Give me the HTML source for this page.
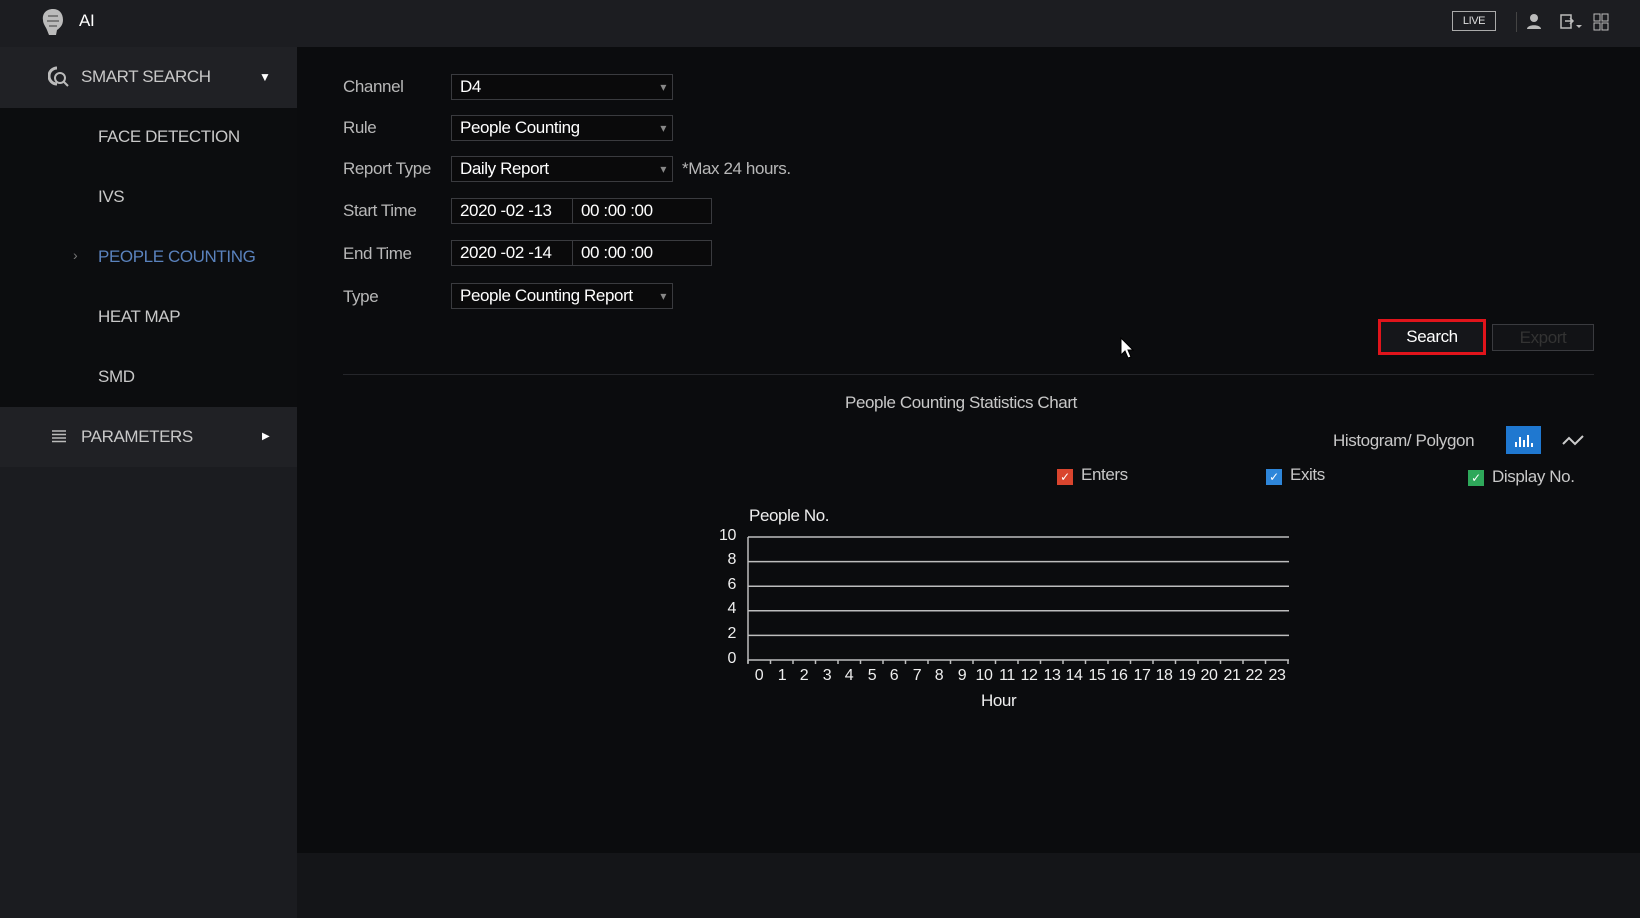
<!DOCTYPE html>
<html><head><meta charset="utf-8"><style>
*{margin:0;padding:0;box-sizing:border-box}
body{width:1640px;height:918px;background:#0b0c0e;font-family:"Liberation Sans",sans-serif;color:#d8d8d8;position:relative;overflow:hidden;font-size:17px;letter-spacing:-0.4px}
.a{position:absolute;white-space:nowrap}
.top{left:0;top:0;width:1640px;height:47px;background:#1c1d21}
.side{left:0;top:47px;width:297px;height:871px;background:#1b1c20}
.sh{left:0;top:47px;width:297px;height:61px;background:#202125}
.sd{left:0;top:108px;width:297px;height:299px;background:#0c0d0f}
.sp{left:0;top:407px;width:297px;height:60px;background:#202125}
.bot{left:297px;top:853px;width:1343px;height:65px;background:#141518}
.lab{left:343px;color:#b8b8b8;font-size:17px}
.inp{left:451px;width:222px;height:26px;border:1px solid #3a3b3f;background:#0a0a0b;color:#fff;padding-left:8px;line-height:24px;font-size:17px}
.inp:after{content:"▾";position:absolute;right:6px;top:0;color:#888;font-size:12px}
.dt{height:26px;border:1px solid #3a3b3f;background:#0a0a0b;color:#fff;padding-left:8px;line-height:24px;font-size:17px}
.si{left:98px;color:#c8c8c8;font-size:17px}
.yl{width:24px;text-align:right;font-size:16px;color:#eee;left:712px}
.xl{font-size:16px;color:#eee;width:24px;text-align:center;top:667px}
.cb{width:16px;height:16px;color:#fff;font-size:12px;text-align:center;line-height:16px}
</style></head><body>
<div class="a top"></div>
<div class="a side"></div><div class="a sh"></div><div class="a sd"></div><div class="a sp"></div>
<div class="a bot"></div>
<svg class="a" style="left:40px;top:8px" width="26" height="28" viewBox="0 0 26 28"><path d="M13 1C6 1 2 6 3 12c0 4 3 7 4 10l2 5h7l1-5c3-2 6-5 6-10C23 5 19 1 13 1z" fill="#bbb"/><path d="M8 8h10M7 13h12M9 18h8" stroke="#666" stroke-width="1.5"/></svg>
<div class="a" style="left:79px;top:11px;font-size:17px;color:#fff">AI</div>
<div class="a" style="left:1452px;top:11px;width:44px;height:20px;border:1px solid #aaa;font-size:11px;text-align:center;line-height:18px;color:#ddd">LIVE</div>
<div class="a" style="left:1516px;top:12px;width:1px;height:20px;background:#444"></div>
<svg class="a" style="left:1526px;top:12px" width="16" height="18"><circle cx="8" cy="6" r="4" fill="#bbb"/><path d="M1 17c0-5 14-5 14 0z" fill="#bbb"/></svg>
<svg class="a" style="left:1560px;top:13px" width="24" height="18"><rect x="1" y="2" width="10" height="13" fill="none" stroke="#bbb" stroke-width="1.5"/><path d="M5 8h8M10 5l3 3-3 3" stroke="#bbb" fill="none" stroke-width="1.5"/><path d="M16 12h6l-3 3z" fill="#bbb"/></svg>
<svg class="a" style="left:1593px;top:13px" width="16" height="18"><rect x="1" y="1" width="6" height="7" fill="none" stroke="#bbb"/><rect x="9" y="1" width="6" height="7" fill="none" stroke="#bbb"/><rect x="1" y="10" width="6" height="7" fill="none" stroke="#bbb"/><rect x="9" y="10" width="6" height="7" fill="none" stroke="#bbb"/></svg>
<svg class="a" style="left:48px;top:66px" width="22" height="22"><path d="M9 2a8 8 0 1 0 0 16" stroke="#bbb" stroke-width="3" fill="none"/><circle cx="12" cy="12" r="5" stroke="#bbb" stroke-width="2" fill="none"/><path d="M15 15l5 5" stroke="#bbb" stroke-width="2"/></svg>
<div class="a" style="left:81px;top:67px;color:#c8c8c8">SMART SEARCH</div>
<div class="a" style="left:259px;top:70px;font-size:12px;color:#fff">▼</div>
<div class="a si" style="top:127px">FACE DETECTION</div>
<div class="a si" style="top:187px">IVS</div>
<div class="a" style="left:73px;top:247px;color:#777;font-size:14px">›</div>
<div class="a si" style="top:247px;color:#5a82bd">PEOPLE COUNTING</div>
<div class="a si" style="top:307px">HEAT MAP</div>
<div class="a si" style="top:367px">SMD</div>
<svg class="a" style="left:51px;top:429px" width="16" height="15"><path d="M1 2h14M1 5.5h14M1 9h14M1 12.5h14" stroke="#bbb" stroke-width="1.6"/></svg>
<div class="a" style="left:81px;top:427px;color:#c8c8c8">PARAMETERS</div>
<div class="a" style="left:262px;top:431px;font-size:10px;color:#fff">▶</div>
<div class="a lab" style="top:77px">Channel</div>
<div class="a inp" style="top:74px">D4</div>
<div class="a lab" style="top:118px">Rule</div>
<div class="a inp" style="top:115px">People Counting</div>
<div class="a lab" style="top:159px">Report Type</div>
<div class="a inp" style="top:156px">Daily Report</div>
<div class="a" style="left:682px;top:159px;color:#b8b8b8">*Max 24 hours.</div>
<div class="a lab" style="top:201px">Start Time</div>
<div class="a dt" style="left:451px;top:198px;width:122px">2020 -02 -13</div>
<div class="a dt" style="left:572px;top:198px;width:140px">00 :00 :00</div>
<div class="a lab" style="top:244px">End Time</div>
<div class="a dt" style="left:451px;top:240px;width:122px">2020 -02 -14</div>
<div class="a dt" style="left:572px;top:240px;width:140px">00 :00 :00</div>
<div class="a lab" style="top:287px">Type</div>
<div class="a inp" style="top:283px">People Counting Report</div>
<div class="a" style="left:1378px;top:319px;width:108px;height:36px;border:3px solid #e0141b;background:#15161a;color:#fff;text-align:center;line-height:30px">Search</div>
<div class="a" style="left:1492px;top:324px;width:102px;height:27px;border:1px solid #3a3b3f;background:#121316;color:#333;text-align:center;line-height:25px">Export</div>
<div class="a" style="left:343px;top:374px;width:1251px;height:1px;background:#25262a"></div>
<div class="a" style="left:845px;top:393px;color:#c8c8c8">People Counting Statistics Chart</div>
<div class="a" style="left:1333px;top:431px;color:#c8c8c8">Histogram/ Polygon</div>
<svg class="a" style="left:1506px;top:426px" width="35" height="28"><rect width="35" height="28" fill="#1f78d0"/><path d="M10 21v-5M14 21v-10M18 21v-7M22 21v-12M26 21v-4" stroke="#fff" stroke-width="2"/></svg>
<svg class="a" style="left:1560px;top:430px" width="28" height="20"><path d="M3 14l6-6 6 6 8-8" stroke="#ccc" stroke-width="2" fill="none"/></svg>
<div class="a cb" style="left:1057px;top:469px;background:#d9452e">✓</div>
<div class="a" style="left:1081px;top:465px;color:#c8c8c8">Enters</div>
<div class="a cb" style="left:1266px;top:469px;background:#2e86d9">✓</div>
<div class="a" style="left:1290px;top:465px;color:#c8c8c8">Exits</div>
<div class="a cb" style="left:1468px;top:470px;background:#2ea85a">✓</div>
<div class="a" style="left:1492px;top:467px;color:#c8c8c8">Display No.</div>
<div class="a" style="left:749px;top:506px;color:#eee">People No.</div>
<svg class="a" style="left:0;top:0" width="1640" height="918">
<g stroke="#bdbdbd" stroke-width="1.5">
<line x1="748" y1="537" x2="1289" y2="537"/><line x1="748" y1="561.6" x2="1289" y2="561.6"/><line x1="748" y1="586.2" x2="1289" y2="586.2"/><line x1="748" y1="610.8" x2="1289" y2="610.8"/><line x1="748" y1="635.4" x2="1289" y2="635.4"/><line x1="748" y1="660" x2="1289" y2="660"/>
<line x1="748" y1="537" x2="748" y2="663"/>
</g>
<path d="M748 660v4M770.5 660v4M793 660v4M815.5 660v4M838 660v4M860.5 660v4M883 660v4M905.5 660v4M928 660v4M950.5 660v4M973 660v4M995.5 660v4M1018 660v4M1040.5 660v4M1063 660v4M1085.5 660v4M1108 660v4M1130.5 660v4M1153 660v4M1175.5 660v4M1198 660v4M1220.5 660v4M1243 660v4M1265.5 660v4M1288 660v4" stroke="#bdbdbd" stroke-width="1.5"/>
</svg>
<div class="a yl" style="top:527px">10</div>
<div class="a yl" style="top:551px">8</div>
<div class="a yl" style="top:576px">6</div>
<div class="a yl" style="top:600px">4</div>
<div class="a yl" style="top:625px">2</div>
<div class="a yl" style="top:650px">0</div>
<div class="a xl" style="left:747px">0</div><div class="a xl" style="left:770px">1</div><div class="a xl" style="left:792px">2</div><div class="a xl" style="left:815px">3</div><div class="a xl" style="left:837px">4</div><div class="a xl" style="left:860px">5</div><div class="a xl" style="left:882px">6</div><div class="a xl" style="left:905px">7</div><div class="a xl" style="left:927px">8</div><div class="a xl" style="left:950px">9</div><div class="a xl" style="left:972px">10</div><div class="a xl" style="left:995px">11</div><div class="a xl" style="left:1017px">12</div><div class="a xl" style="left:1040px">13</div><div class="a xl" style="left:1062px">14</div><div class="a xl" style="left:1085px">15</div><div class="a xl" style="left:1107px">16</div><div class="a xl" style="left:1130px">17</div><div class="a xl" style="left:1152px">18</div><div class="a xl" style="left:1175px">19</div><div class="a xl" style="left:1197px">20</div><div class="a xl" style="left:1220px">21</div><div class="a xl" style="left:1242px">22</div><div class="a xl" style="left:1265px">23</div>
<div class="a" style="left:981px;top:691px;color:#eee">Hour</div>
<svg class="a" style="left:1120px;top:337px" width="14" height="22"><path d="M1 1v17l4-4 3 7 3-1-3-7h5z" fill="#fff" stroke="#000"/></svg>
</body></html>
